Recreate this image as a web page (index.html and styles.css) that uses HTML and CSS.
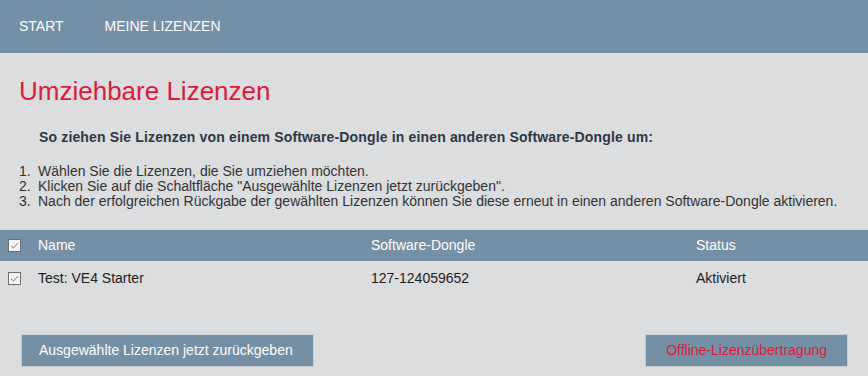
FILE: index.html
```html
<!DOCTYPE html>
<html lang="de">
  <head>
    <meta charset="UTF-8" />
    <title>Umziehbare Lizenzen</title>
    <link rel="stylesheet" href="styles.css">
  </head>
  <body>
    <div class="topnav">
      <a class="topnav_link" href="#">START</a>
      <a class="topnav_link" href="#">MEINE LIZENZEN</a>
    </div>
    <div class="content">
      <h1 class="content_title">Umziehbare Lizenzen</h1>
      <p class="content_lead">So ziehen Sie Lizenzen von einem Software-Dongle in einen anderen Software-Dongle um:</p>
      <ol class="content_steps">
        <li>Wählen Sie die Lizenzen, die Sie umziehen möchten.</li>
        <li>Klicken Sie auf die Schaltfläche "Ausgewählte Lizenzen jetzt zurückgeben".</li>
        <li>Nach der erfolgreichen Rückgabe der gewählten Lizenzen können Sie diese erneut in einen anderen Software-Dongle aktivieren.</li>
      </ol>
    </div>
    <div class="license_table">
      <div class="license_row license_row-head">
        <span class="check">
          <svg width="11" height="11" viewBox="0 0 11 11"><path d="M2 6 L4.5 8 L9 3" fill="none" stroke="#7a7a7a" stroke-width="1"/></svg>
        </span>
        <div>Name</div>
        <div>Software-Dongle</div>
        <div>Status</div>
      </div>
      <div class="license_row">
        <span class="check">
          <svg width="11" height="11" viewBox="0 0 11 11"><path d="M2 6 L4.5 8 L9 3" fill="none" stroke="#7a7a7a" stroke-width="1"/></svg>
        </span>
        <div>Test: VE4 Starter</div>
        <div>127-124059652</div>
        <div>Aktiviert</div>
      </div>
    </div>
    <div class="actions">
      <a class="btn" href="#">Ausgewählte Lizenzen jetzt zurückgeben</a>
      <a class="btn btn-offline" href="#">Offline-Lizenzübertragung</a>
    </div>
  </body>
</html>
```
FILE: styles.css
```css
body {
  margin: 0;
  background-color: #dcdddf;
  color: #222;
  font-family: "Liberation Sans", Arial, sans-serif;
  font-size: 14px;
  line-height: 1.2;
}

a {
  text-decoration: none;
}

.topnav {
  height: 53px;
  background-color: #7490a6;
  display: flex;
  align-items: center;
  gap: 41px;
  padding-left: 19px;
}

.topnav_link {
  color: #fff;
  font-size: 14px;
}

.content {
  padding: 0 19px;
}

.content_title {
  margin: 23px 0 0;
  color: #e2173c;
  font-size: 26px;
  font-weight: normal;
  line-height: 30px;
}

.content_lead {
  margin: 23px 0 0 20px;
  color: #2d3846;
  font-size: 14px;
  font-weight: bold;
  letter-spacing: 0.15px;
  line-height: 17px;
}

.content_steps {
  margin: 18px 0 0;
  padding: 0;
  list-style: none;
  counter-reset: step;
  color: #333;
  line-height: 15px;
}

.content_steps li {
  display: flex;
  counter-increment: step;
}

.content_steps li::before {
  content: counter(step) ".";
  flex: none;
  width: 19px;
}

.license_table {
  margin-top: 21px;
}

.license_row {
  display: grid;
  grid-template-columns: 38px 333px 325px 1fr;
  align-items: center;
  height: 34px;
}

.license_row-head {
  height: 31px;
  background-color: #7490a6;
  color: #fff;
}

.check {
  display: flex;
  align-items: center;
  justify-content: center;
  width: 11px;
  height: 11px;
  margin-left: 8px;
  background-color: #f4f4f4;
  border: 1px solid #6f6f6f;
}

.actions {
  display: flex;
  justify-content: space-between;
  padding: 39px 20px 0 21px;
}

.btn {
  display: block;
  height: 31px;
  line-height: 31px;
  padding: 0 20px 0 17px;
  background-color: #7490a6;
  border: 1px solid #c8ccd0;
  color: #fff;
}

.btn-offline {
  color: #e2173c;
  padding: 0 20px;
}
```
